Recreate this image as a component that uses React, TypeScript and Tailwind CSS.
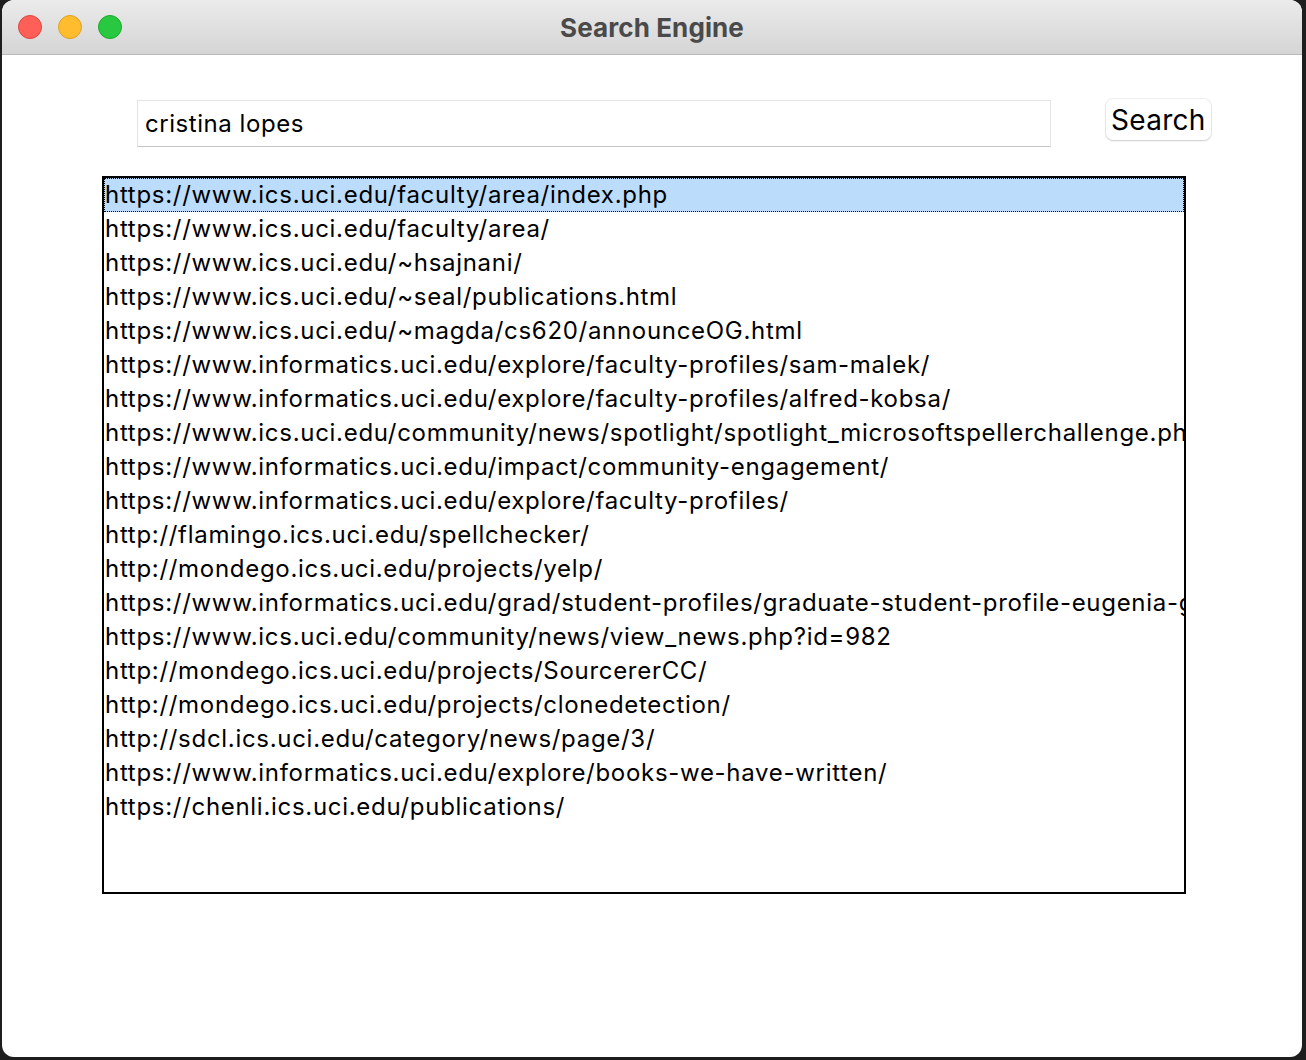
import React from 'react';

const results = [
  'https://www.ics.uci.edu/faculty/area/index.php',
  'https://www.ics.uci.edu/faculty/area/',
  'https://www.ics.uci.edu/~hsajnani/',
  'https://www.ics.uci.edu/~seal/publications.html',
  'https://www.ics.uci.edu/~magda/cs620/announceOG.html',
  'https://www.informatics.uci.edu/explore/faculty-profiles/sam-malek/',
  'https://www.informatics.uci.edu/explore/faculty-profiles/alfred-kobsa/',
  'https://www.ics.uci.edu/community/news/spotlight/spotlight_microsoftspellerchallenge.php',
  'https://www.informatics.uci.edu/impact/community-engagement/',
  'https://www.informatics.uci.edu/explore/faculty-profiles/',
  'http://flamingo.ics.uci.edu/spellchecker/',
  'http://mondego.ics.uci.edu/projects/yelp/',
  'https://www.informatics.uci.edu/grad/student-profiles/graduate-student-profile-eugenia-gabrielova/',
  'https://www.ics.uci.edu/community/news/view_news.php?id=982',
  'http://mondego.ics.uci.edu/projects/SourcererCC/',
  'http://mondego.ics.uci.edu/projects/clonedetection/',
  'http://sdcl.ics.uci.edu/category/news/page/3/',
  'https://www.informatics.uci.edu/explore/books-we-have-written/',
  'https://chenli.ics.uci.edu/publications/',
];

function TrafficLights() {
  return (
    <div className="flex items-center gap-4 pl-[16px]">
      <span className="block h-6 w-6 rounded-full bg-[#fe5f57] border border-[#e0443e]" />
      <span className="block h-6 w-6 rounded-full bg-[#febc2e] border border-[#dea123]" />
      <span className="block h-6 w-6 rounded-full bg-[#28c840] border border-[#1aab29]" />
    </div>
  );
}

export default function App() {
  return (
    <div
      className="h-[1060px] w-[1306px] bg-[#1e1e1e] pl-[2px] pr-[4px] pb-[3px]"
      style={{ fontFamily: 'Inter, "Liberation Sans", Arial, sans-serif' }}
    >
      <div className="flex h-full flex-col overflow-hidden rounded-[12px] bg-white">
        <div className="relative flex h-[55px] shrink-0 items-center border-b border-[#b9b9b9] bg-gradient-to-b from-[#ebebeb] to-[#d5d5d5]">
          <TrafficLights />
          <div className="absolute inset-x-0 top-0 flex h-[54px] items-center justify-center text-[26px] font-bold tracking-[0.1px] text-[#4a4a4a]">
            Search Engine
          </div>
        </div>

        <div className="flex items-start pt-[45px] pl-[135px]">
          <div className="flex h-[47px] w-[914px] items-center border border-[#e4e4e4] border-b-[#c4c4c4] pl-[7px] text-[24px] tracking-[0.55px] text-black">
            cristina lopes
          </div>
          <button className="ml-[55px] mt-[-1px] h-[41px] rounded-[7px] bg-white px-[5px] text-[28px] tracking-[0.3px] text-black shadow-[0_0_0_1px_rgba(0,0,0,0.06),0_1px_2px_rgba(0,0,0,0.15)]">
            Search
          </button>
        </div>

        <div className="ml-[100px] mt-[29px] h-[718px] w-[1084px] overflow-hidden border-2 border-black">
          {results.map((url, i) => (
            <div
              key={url}
              className={
                i === 0
                  ? 'flex h-[34px] items-center overflow-hidden whitespace-nowrap border border-dotted border-black bg-[#bcdcfc] pl-0 text-[24px] tracking-[0.7px] text-black'
                  : 'flex h-[34px] items-center overflow-hidden whitespace-nowrap pl-[1px] text-[24px] tracking-[0.7px] text-black'
              }
            >
              {url}
            </div>
          ))}
        </div>
      </div>
    </div>
  );
}
